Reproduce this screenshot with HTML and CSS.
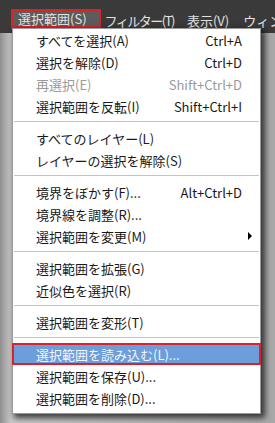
FILE: index.html
```html
<!DOCTYPE html>
<html lang="ja">
<head>
  <meta charset="UTF-8" />
  <title>選択範囲メニュー</title>
  <link rel="stylesheet" href="styles.css">
</head>
<body>
  <div class="menubar">
    <span class="top-item active">選択範囲(S)</span>
    <span class="top-item narrow">フィルター(T)</span>
    <span class="top-item view">表示(V)</span>
    <span class="top-item">ウィン</span>
  </div>

  <div class="workspace">
    <ul class="menu">
      <li class="item"><span>すべてを選択(A)</span><span class="key">Ctrl+A</span></li>
      <li class="item"><span>選択を解除(D)</span><span class="key">Ctrl+D</span></li>
      <li class="item disabled"><span>再選択(E)</span><span class="key">Shift+Ctrl+D</span></li>
      <li class="item"><span>選択範囲を反転(I)</span><span class="key">Shift+Ctrl+I</span></li>
      <li class="sep"></li>
      <li class="item"><span>すべてのレイヤー(L)</span></li>
      <li class="item"><span>レイヤーの選択を解除(S)</span></li>
      <li class="sep"></li>
      <li class="item"><span>境界をぼかす(F)...</span><span class="key">Alt+Ctrl+D</span></li>
      <li class="item"><span>境界線を調整(R)...</span></li>
      <li class="item"><span>選択範囲を変更(M)</span><span class="arrow"></span></li>
      <li class="sep"></li>
      <li class="item"><span>選択範囲を拡張(G)</span></li>
      <li class="item"><span>近似色を選択(R)</span></li>
      <li class="sep"></li>
      <li class="item"><span>選択範囲を変形(T)</span></li>
      <li class="sep"></li>
      <li class="item hover"><span>選択範囲を読み込む(L)...</span></li>
      <li class="item"><span>選択範囲を保存(U)...</span></li>
      <li class="item"><span>選択範囲を削除(D)...</span></li>
    </ul>
  </div>
</body>
</html>
```

FILE: styles.css
```css
body {
  margin: 0;
  width: 275px;
  height: 423px;
  overflow: hidden;
  background-color: #b4b4b4;
  font-family: "Noto Sans CJK JP", "DejaVu Sans", sans-serif;
  font-size: 13px;
}
.menubar {
  display: flex;
  align-items: flex-end;
  height: 33px;
  padding: 0 0 5px 11px;
  box-sizing: border-box;
  background-color: #3a3a3a;
  white-space: nowrap;
  overflow: hidden;
}
.top-item {
  flex-shrink: 0;
  color: #e2e2e2;
  line-height: 15px;
  height: 15px;
  margin-right: 14px;
}
.top-item.active {
  padding: 0 12px 0 5px;
  margin-right: 4px;
  background-color: #5c5c5c;
  border: 2px solid #d8232a;
}
.top-item.narrow {
  letter-spacing: -1.5px;
  margin-right: 13px;
}
.workspace {
  position: relative;
  height: 390px;
  background: linear-gradient(90deg, #8e8e8e 0, #c9c9c9 11px, #a8a8a8 100%);
}
.menu {
  position: absolute;
  left: 12px;
  top: -5px;
  width: 249px;
  margin: 0;
  padding: 0 0 4px;
  list-style: none;
  background-color: #fff;
  box-sizing: border-box;
  border: 1px solid #9a9a9a;
  box-shadow: 3px 3px 6px 1px rgba(0, 0, 0, 0.7);
}
.item {
  display: flex;
  justify-content: space-between;
  align-items: center;
  height: 22px;
  padding: 0 18px 0 23px;
  color: #1a1a1a;
  white-space: nowrap;
}
.item.disabled {
  color: #9a9a9a;
}
.item.hover {
  background-color: #6c9edc;
  color: #f4f4f4;
  border: 2px solid #d8232a;
  margin: 0 -1px;
  padding-left: 22px;
  box-sizing: border-box;
}
.arrow {
  width: 0;
  height: 0;
  border-top: 4px solid transparent;
  border-bottom: 4px solid transparent;
  border-left: 4px solid #000;
  margin-right: -10px;
}
.sep {
  height: 1px;
  margin: 4px 1px 5px;
  background-color: #c4c4c4;
}
```
